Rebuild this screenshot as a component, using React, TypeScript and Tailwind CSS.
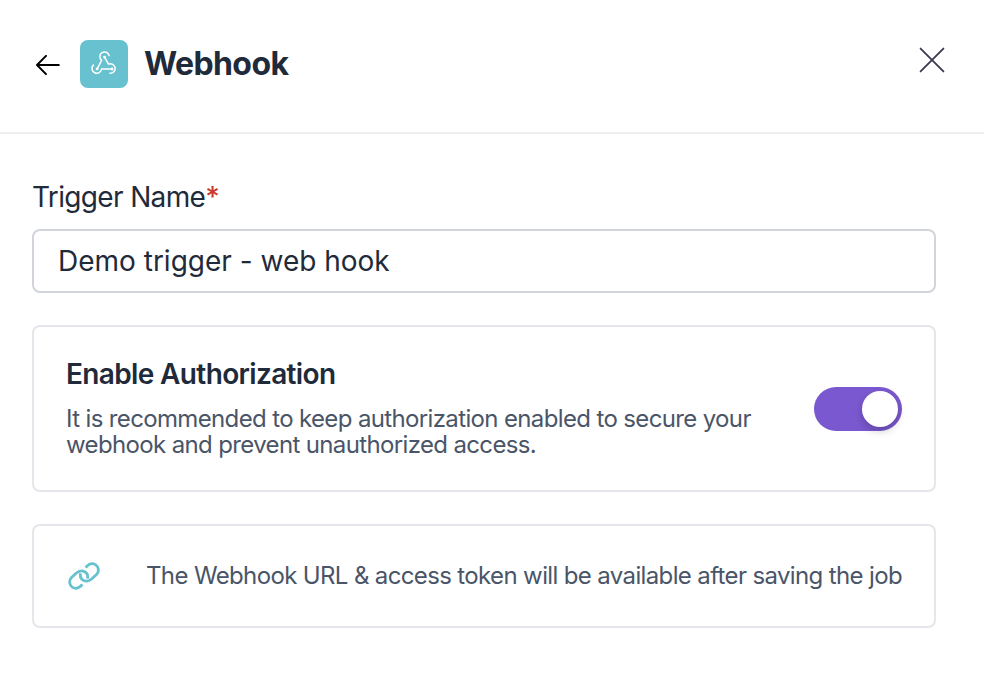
import { useState } from "react";

function BackIcon() {
  return (
    <svg width="24" height="24" viewBox="0 0 24 24" fill="none" stroke="#000" strokeWidth="2" strokeLinecap="round" strokeLinejoin="round">
      <path d="M22.8 12H1M10 2.9 1 12l9 9.1" />
    </svg>
  );
}

function WebhookIcon() {
  return (
    <svg width="48" height="48" viewBox="-0.4 -0.3 48 48" fill="none" stroke="#fff" strokeWidth="1.5" strokeLinecap="round">
      <path d="M28.7 15.2A4.7 4.7 0 1 0 21.2 20L17 28.4" />
      <path d="M24.1 16.8 28.1 23.8A4.8 4.8 0 1 1 29.6 33" />
      <path d="M13 24.8A4.8 4.8 0 1 0 21.2 28.7H31.6" />
      <g fill="#fff" stroke="none">
        <circle cx="24.1" cy="16.8" r="1.4" />
        <circle cx="16.7" cy="28.6" r="1.4" />
        <circle cx="31.7" cy="28.7" r="1.4" />
      </g>
    </svg>
  );
}

function CloseIcon() {
  return (
    <svg width="26" height="26" viewBox="0 0 26 26" fill="none" stroke="#3f3d56" strokeWidth="1.9" strokeLinecap="round">
      <path d="M1.6 1.6 24.4 24.4M24.4 1.6 1.6 24.4" />
    </svg>
  );
}

function LinkIcon() {
  return (
    <svg className="shrink-0" width="36" height="36" viewBox="66 558 36 36" fill="none" stroke="#67c1cf" strokeWidth="2.8" strokeLinecap="butt">
      <path d="M82.4 584.4C79.5 587.8 76 589.4 72.6 587.4C69 585.1 68.6 580.5 71.5 577.6L76.4 573C79.4 570.4 83.3 570.2 86 572.6C87.5 574 88 576 87.6 578.6" />
      <path d="M85.6 567.6C88.5 564.2 92 562.6 95.4 564.6C99 566.9 99.4 571.5 96.5 574.4L91.6 579C88.6 581.6 84.7 581.8 82 579.4C80.5 578 80 576 80.4 573.4" />
    </svg>
  );
}

export default function App() {
  const [enabled, setEnabled] = useState(true);
  const [name, setName] = useState("Demo trigger - web hook");

  return (
    <div className="h-[698px] w-[984px] overflow-hidden bg-white font-[Inter,sans-serif] text-[#1f2a3a]">
      <header className="flex h-[134px] items-start justify-between border-b-2 border-[#eeeeef] pt-10 pr-[39px] pl-9">
        <div className="flex h-12 items-center">
          <button aria-label="Back" className="mt-0.5">
            <BackIcon />
          </button>
          <div className="ml-5 size-12 rounded-lg bg-[#67c1cf]">
            <WebhookIcon />
          </div>
          <h1 className="ml-4 text-[32px] leading-none font-bold tracking-[-0.6px]">Webhook</h1>
        </div>
        <button aria-label="Close" className="mt-[7px]">
          <CloseIcon />
        </button>
      </header>

      <main className="flex w-[936px] flex-col pt-[43px] pl-8">
        <label htmlFor="trigger" className="h-10 text-[28px] leading-10 tracking-[-0.65px]">
          Trigger Name<span className="font-medium text-[#c93a2b]">*</span>
        </label>
        <input
          id="trigger"
          value={name}
          onChange={(e) => setName(e.target.value)}
          className="mt-3 h-16 rounded-lg border-2 border-[#d1d5db] px-6 text-[28px] outline-none"
        />

        <section className="mt-8 flex h-[167px] items-center justify-between rounded-lg border-2 border-[#e5e5eb] px-8">
          <div className="pb-0.5">
            <h2 className="text-[28px] leading-8 font-semibold tracking-[-0.64px]">Enable Authorization</h2>
            <p className="mt-4 w-[700px] text-[24px] leading-[26px] tracking-[-0.64px] text-[#4a5568]">
              It is recommended to keep authorization enabled to secure your
              <br />
              webhook and prevent unauthorized access.
            </p>
          </div>
          <button
            role="switch"
            aria-checked={enabled}
            aria-label="Enable Authorization"
            onClick={() => setEnabled(!enabled)}
            className={`flex h-11 w-[88px] items-center rounded-full p-1 ${enabled ? "justify-end bg-[#7a58cf]" : "justify-start bg-gray-300"}`}
          >
            <span className="size-9 rounded-full bg-white shadow-[0_4px_8px_rgba(0,0,0,0.2)]" />
          </button>
        </section>

        <section className="mt-8 flex h-[104px] items-center rounded-lg border-2 border-[#e5e5eb] pl-8">
          <LinkIcon />
          <p className="ml-[44px] text-[24px] tracking-[-0.635px] whitespace-nowrap text-[#4a5568]">
            The Webhook URL &amp; access token will be available after saving the job
          </p>
        </section>
      </main>
    </div>
  );
}
